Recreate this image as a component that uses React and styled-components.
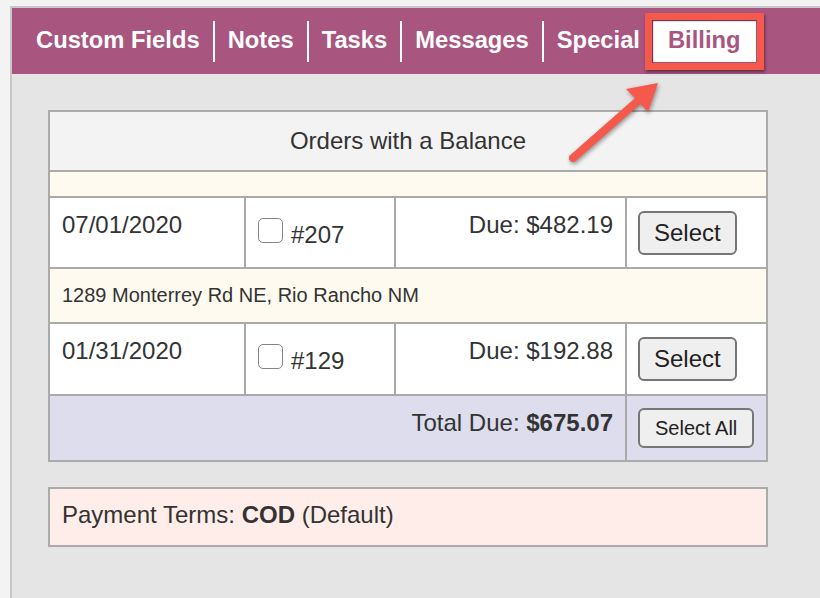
import React from "react";
import styled, { createGlobalStyle } from "styled-components";

const GlobalStyle = createGlobalStyle`
  body {
    margin: 0;
    background: #f3f3f3;
    font-family: "Liberation Sans", Arial, Helvetica, sans-serif;
    color: #333;
  }
`;

const Frame = styled.div`
  position: relative;
  margin: 6px 0 0 10px;
  height: calc(100vh - 6px);
  box-sizing: border-box;
  border-top: 2px solid #c8c8c8;
  border-left: 2px solid #c8c8c8;
  background: #e5e5e5;
  overflow: hidden;
`;

const TabBar = styled.nav`
  display: flex;
  align-items: center;
  height: 66px;
  padding-left: 11px;
  background: #a8557f;
`;

const Tab = styled.div`
  position: relative;
  height: 41px;
  line-height: 38px;
  padding: 0 ${(p) => (p.$active ? "15px" : "13px")};
  font-size: 23.75px;
  font-weight: bold;
  color: ${(p) => (p.$active ? "#a8557f" : "#fff")};
  background: ${(p) => (p.$active ? "#fff" : "transparent")};
  border-left: ${(p) => (p.$divider ? "2px solid #fff" : "none")};

  ${(p) =>
    p.$active &&
    `
    &::after {
      content: "";
      position: absolute;
      inset: -8px;
      border: 7px solid #f5594c;
      box-shadow: 1px 2px 3px rgba(0, 0, 0, 0.45),
        inset 1px 1px 2px rgba(0, 0, 0, 0.45);
    }
  `}
`;

const Content = styled.main`
  padding: 36px 0 0 36px;
`;

const Table = styled.div`
  display: grid;
  width: 720px;
  box-sizing: border-box;
  grid-template-columns: 194px 148px 229px 139px;
  grid-template-rows: 58px 24px 69px 53px 70px 64px;
  gap: 2px;
  border: 2px solid #aaa;
  background: #aaa;
`;

const Cell = styled.div`
  box-sizing: border-box;
  padding: 13px 12px 0;
  font-size: 24px;
  background: ${(p) => p.$bg || "#fff"};
  text-align: ${(p) => p.$align || "left"};
  grid-column: ${(p) => p.$span || "auto"};
`;

const TitleCell = styled(Cell)`
  display: flex;
  align-items: center;
  justify-content: center;
  padding: 0;
`;

const AddressCell = styled(Cell)`
  display: flex;
  align-items: center;
  padding: 0 12px;
  font-size: 20px;
`;

const CheckCell = styled(Cell)`
  display: flex;
  align-items: baseline;
  gap: 8px;
  padding-top: 20px;
`;

const Checkbox = styled.span`
  display: block;
  width: 25px;
  height: 25px;
  box-sizing: border-box;
  border: 1.5px solid #858585;
  border-radius: 5px;
  background: #fff;
`;

const ActionCell = styled(Cell)`
  padding: ${(p) => (p.$small ? "12px" : "13px")} 11px 0;
`;

const Button = styled.button`
  box-sizing: border-box;
  height: ${(p) => (p.$small ? "40px" : "44px")};
  padding: 0 ${(p) => (p.$small ? "15px" : "14px")};
  font-family: inherit;
  font-size: ${(p) => (p.$small ? "20px" : "24px")};
  color: #222;
  background: #efefef;
  border: 2px solid #767676;
  border-radius: 6px;
`;

const Terms = styled.div`
  width: 720px;
  height: 60px;
  box-sizing: border-box;
  margin-top: 25px;
  padding: 12px 12px 0;
  font-size: 24px;
  background: #ffede9;
  border: 2px solid #aaa;
`;

const Arrow = styled.svg`
  position: absolute;
  left: 548px;
  top: 67px;
  filter: drop-shadow(1px 2px 2px rgba(0, 0, 0, 0.4));
`;

const tabs = ["Custom Fields", "Notes", "Tasks", "Messages", "Special", "Billing"];

const orders = [
  { date: "07/01/2020", number: "#207", due: "$482.19" },
  { date: "01/31/2020", number: "#129", due: "$192.88" },
];

const OrderRow = ({ order }) => (
  <>
    <Cell>{order.date}</Cell>
    <CheckCell>
      <Checkbox />
      <span>{order.number}</span>
    </CheckCell>
    <Cell $align="right">Due: {order.due}</Cell>
    <ActionCell>
      <Button>Select</Button>
    </ActionCell>
  </>
);

const App = () => (
  <>
    <GlobalStyle />
    <Frame>
      <TabBar>
        {tabs.map((name, i) => {
          const active = name === "Billing";
          return (
            <Tab key={name} $active={active} $divider={i > 0 && !active}>
              {name}
            </Tab>
          );
        })}
      </TabBar>
      <Content>
        <Table>
          <TitleCell $bg="#f3f3f3" $span="1 / -1">
            Orders with a Balance
          </TitleCell>
          <Cell $bg="#fffaf0" $span="1 / -1" />
          <OrderRow order={orders[0]} />
          <AddressCell $bg="#fffaf0" $span="1 / -1">
            1289 Monterrey Rd NE, Rio Rancho NM
          </AddressCell>
          <OrderRow order={orders[1]} />
          <Cell $bg="#dddded" $span="1 / 4" $align="right">
            Total Due: <b>$675.07</b>
          </Cell>
          <ActionCell $bg="#dddded" $small>
            <Button $small>Select All</Button>
          </ActionCell>
        </Table>
        <Terms>
          Payment Terms: <b>COD</b> (Default)
        </Terms>
      </Content>
      <Arrow width="110" height="95" viewBox="0 0 110 95">
        <line
          x1="13"
          y1="83"
          x2="80"
          y2="24"
          stroke="#f5594c"
          strokeWidth="8"
          strokeLinecap="round"
        />
        <polygon points="98,8 66,14 77,25 88,37" fill="#f5594c" />
      </Arrow>
    </Frame>
  </>
);

export default App;
